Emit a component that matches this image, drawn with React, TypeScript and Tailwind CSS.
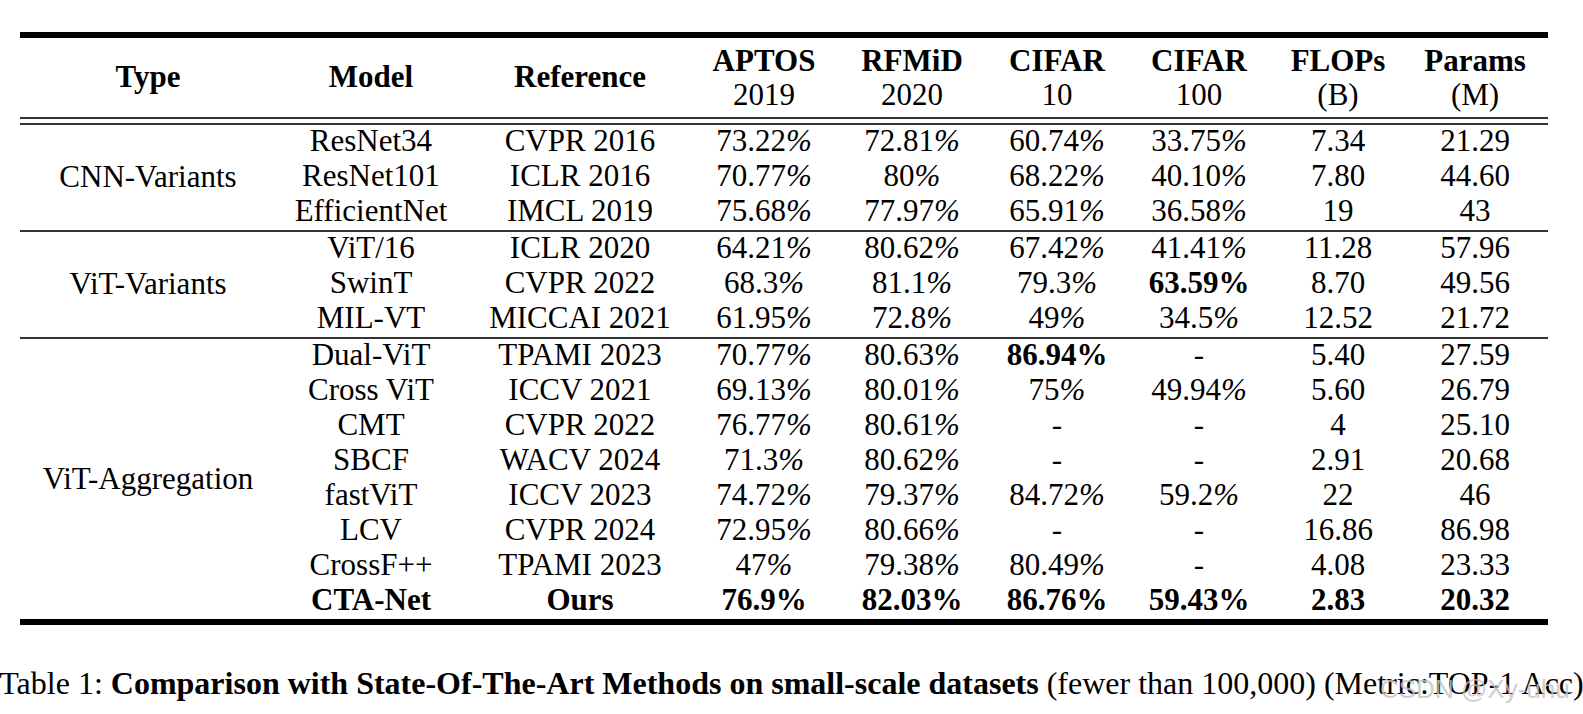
const cols = "grid grid-cols-[190px_228px_140px_156px_134px_150px_128px_146px]";

type Cell = string | { v: string; b: true };

type Row = { model: string; ref: string; cells: Cell[]; bold?: boolean };

const groups: { type: string; rows: Row[] }[] = [
  {
    type: "CNN-Variants",
    rows: [
      { model: "ResNet34", ref: "CVPR 2016", cells: ["73.22%", "72.81%", "60.74%", "33.75%", "7.34", "21.29"] },
      { model: "ResNet101", ref: "ICLR 2016", cells: ["70.77%", "80%", "68.22%", "40.10%", "7.80", "44.60"] },
      { model: "EfficientNet", ref: "IMCL 2019", cells: ["75.68%", "77.97%", "65.91%", "36.58%", "19", "43"] },
    ],
  },
  {
    type: "ViT-Variants",
    rows: [
      { model: "ViT/16", ref: "ICLR 2020", cells: ["64.21%", "80.62%", "67.42%", "41.41%", "11.28", "57.96"] },
      { model: "SwinT", ref: "CVPR 2022", cells: ["68.3%", "81.1%", "79.3%", { v: "63.59%", b: true }, "8.70", "49.56"] },
      { model: "MIL-VT", ref: "MICCAI 2021", cells: ["61.95%", "72.8%", "49%", "34.5%", "12.52", "21.72"] },
    ],
  },
  {
    type: "ViT-Aggregation",
    rows: [
      { model: "Dual-ViT", ref: "TPAMI 2023", cells: ["70.77%", "80.63%", { v: "86.94%", b: true }, "-", "5.40", "27.59"] },
      { model: "Cross ViT", ref: "ICCV 2021", cells: ["69.13%", "80.01%", "75%", "49.94%", "5.60", "26.79"] },
      { model: "CMT", ref: "CVPR 2022", cells: ["76.77%", "80.61%", "-", "-", "4", "25.10"] },
      { model: "SBCF", ref: "WACV 2024", cells: ["71.3%", "80.62%", "-", "-", "2.91", "20.68"] },
      { model: "fastViT", ref: "ICCV 2023", cells: ["74.72%", "79.37%", "84.72%", "59.2%", "22", "46"] },
      { model: "LCV", ref: "CVPR 2024", cells: ["72.95%", "80.66%", "-", "-", "16.86", "86.98"] },
      { model: "CrossF++", ref: "TPAMI 2023", cells: ["47%", "79.38%", "80.49%", "-", "4.08", "23.33"] },
      { model: "CTA-Net", ref: "Ours", bold: true, cells: ["76.9%", "82.03%", "86.76%", "59.43%", "2.83", "20.32"] },
    ],
  },
];

function Value({ cell, bold }: { cell: Cell; bold?: boolean }) {
  const v = typeof cell === "string" ? cell : cell.v;
  const b = bold || typeof cell !== "string";
  if (v.endsWith("%")) {
    return (
      <span className={b ? "font-bold" : ""}>
        {v.slice(0, -1)}
        <span className={b ? "" : "italic"}>%</span>
      </span>
    );
  }
  return <span className={b ? "font-bold" : ""}>{v}</span>;
}

const heads = [
  ["APTOS", "2019"],
  ["RFMiD", "2020"],
  ["CIFAR", "10"],
  ["CIFAR", "100"],
  ["FLOPs", "(B)"],
  ["Params", "(M)"],
];

export default function App() {
  return (
    <div className="relative h-[714px] w-[1583px] overflow-hidden bg-white font-['Liberation_Serif','Times_New_Roman',serif] text-black">
      <div className="ml-[20px] mt-[32px] w-[1528px]">
        <div className="h-[6px] bg-black" />

        {/* header */}
        <div className="flex h-[79px] text-[31px]">
          <div className="flex w-[256px] items-center justify-center font-bold">Type</div>
          <div className={`${cols} flex-1`}>
            <div className="flex items-center justify-center font-bold">Model</div>
            <div className="flex items-center justify-center font-bold">Reference</div>
            {heads.map(([a, b], i) => (
              <div key={i} className="flex flex-col items-center justify-center leading-[34px]">
                <span className="font-bold">{a}</span>
                <span>{b}</span>
              </div>
            ))}
          </div>
        </div>

        <div className="h-[2px] bg-[#333]" />
        <div className="h-[4px]" />
        <div className="h-[2px] bg-[#333]" />

        {groups.map((g, gi) => (
          <div key={g.type}>
            {gi > 0 && <div className="h-[2px] bg-[#333]" />}
            <div className="flex text-[31px]">
              <div className="flex w-[256px] items-center justify-center">{g.type}</div>
              <div className="flex-1">
                {g.rows.map((r) => (
                  <div key={r.model} className={`${cols} h-[35px] items-center pb-[4px] leading-[31px]`}>
                    <div className={`text-center ${r.bold ? "font-bold" : ""}`}>{r.model}</div>
                    <div className={`text-center ${r.bold ? "font-bold" : ""}`}>{r.ref}</div>
                    {r.cells.map((c, ci) => (
                      <div key={ci} className="text-center">
                        <Value cell={c} bold={r.bold} />
                      </div>
                    ))}
                  </div>
                ))}
              </div>
            </div>
          </div>
        ))}

        <div className="h-[6px] bg-black" />
      </div>

      {/* caption */}
      <div className="mt-[42px] flex justify-center whitespace-nowrap text-[32px] leading-[32px]">
        <p>
          Table 1: <span className="font-bold">Comparison with State-Of-The-Art Methods on small-scale datasets</span>{" "}
          (fewer than 100,000) (Metric:TOP-1 Acc)
        </p>
      </div>

      <div className="pointer-events-none absolute left-[1380px] top-[676px] font-['Liberation_Sans',sans-serif] text-[26px] leading-[26px] text-[#c4c4c4] opacity-80">
        CSDN @Xy-uhu
      </div>
    </div>
  );
}
